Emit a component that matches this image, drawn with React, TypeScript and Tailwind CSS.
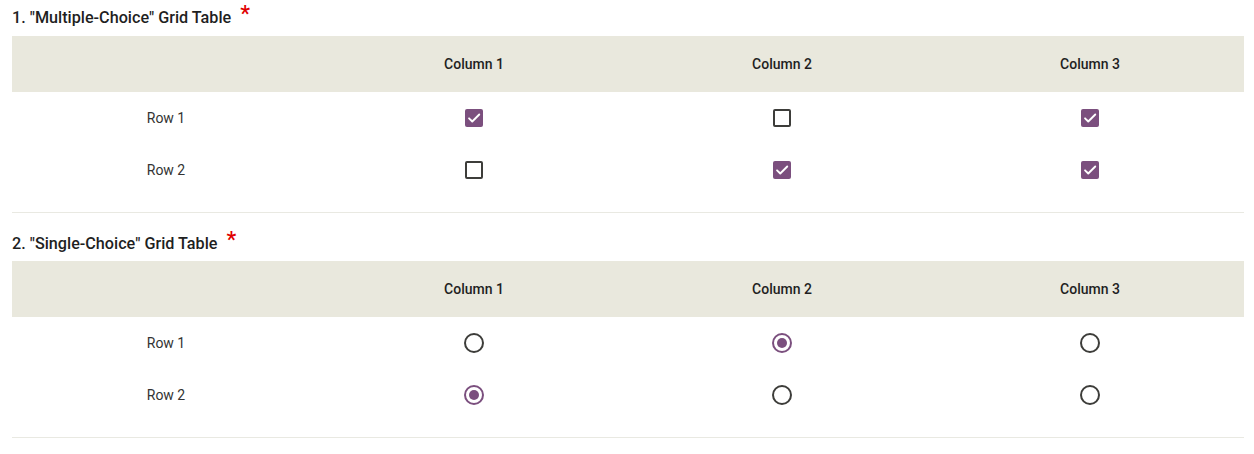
import React from "react";

const COLUMNS = ["Column 1", "Column 2", "Column 3"];

type Section = {
  title: string;
  kind: "checkbox" | "radio";
  rows: { label: string; values: boolean[] }[];
};

const SECTIONS: Section[] = [
  {
    title: '1. "Multiple-Choice" Grid Table',
    kind: "checkbox",
    rows: [
      { label: "Row 1", values: [true, false, true] },
      { label: "Row 2", values: [false, true, true] },
    ],
  },
  {
    title: '2. "Single-Choice" Grid Table',
    kind: "radio",
    rows: [
      { label: "Row 1", values: [false, true, false] },
      { label: "Row 2", values: [true, false, false] },
    ],
  },
];

function Checkbox({ checked }: { checked: boolean }) {
  if (checked) {
    return (
      <span className="flex h-[18px] w-[18px] items-center justify-center rounded-[2px] bg-[#7b4f7e]">
        <svg width="14" height="14" viewBox="0 0 24 24" fill="none">
          <path d="M3.5 12.5l5.5 5.5L21 6" stroke="#fff" strokeWidth="3.2" strokeLinecap="round" strokeLinejoin="round" />
        </svg>
      </span>
    );
  }
  return <span className="block h-[18px] w-[18px] rounded-[2px] border-2 border-[#3d3d3a]" />;
}

function Radio({ checked }: { checked: boolean }) {
  if (checked) {
    return (
      <span className="flex h-[20px] w-[20px] items-center justify-center rounded-full border-2 border-[#7b4f7e]">
        <span className="block h-[10px] w-[10px] rounded-full bg-[#7b4f7e]" />
      </span>
    );
  }
  return <span className="block h-[20px] w-[20px] rounded-full border-2 border-[#3d3d3a]" />;
}

export default function App() {
  return (
    <div className="min-h-screen bg-white pl-3 pr-[10px] font-['Roboto',sans-serif] text-[#1f1f1f]">
      {SECTIONS.map((section, i) => (
        <section key={section.title} className={`border-b border-[#e9e9e2] pb-4 ${i === 0 ? "pt-[6px]" : "pt-[19px]"}`}>
          <h2 className={`flex h-6 items-center text-[16.2px] font-medium leading-6 ${i === 0 ? "mb-[6px]" : "mb-[5px]"}`}>
            {section.title}
            <span className="relative -top-[4px] ml-[9px] text-[22px] leading-none text-[#e00000]">*</span>
          </h2>

          <div className="grid h-14 grid-cols-4 items-center bg-[#e9e8dd] text-[14px] font-medium">
            <div />
            {COLUMNS.map((c) => (
              <div key={c} className="text-center">{c}</div>
            ))}
          </div>

          {section.rows.map((row) => (
            <div key={row.label} className="grid h-[52px] grid-cols-4 items-center text-[14px] text-[#333]">
              <div className="text-center">{row.label}</div>
              {row.values.map((v, j) => (
                <div key={j} className="flex justify-center">
                  {section.kind === "checkbox" ? <Checkbox checked={v} /> : <Radio checked={v} />}
                </div>
              ))}
            </div>
          ))}
        </section>
      ))}
    </div>
  );
}
